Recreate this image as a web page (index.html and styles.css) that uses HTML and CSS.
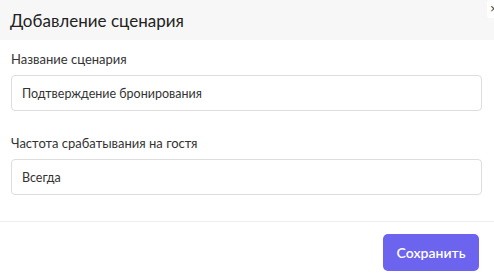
FILE: index.html
```html
<!DOCTYPE html>
<html lang="ru">
<head>
  <meta charset="UTF-8">
  <meta name="viewport" content="width=device-width, initial-scale=1.0">
  <title>Добавление сценария</title>
  <link rel="stylesheet" href="styles.css">
</head>
<body>
  <div class="modal">
    <div class="modal-header">
      <h2 class="modal-title">Добавление сценария</h2>
      <button class="close-btn">×</button>
    </div>
    <div class="modal-body">
      <div class="field">
        <label class="field-label">Название сценария</label>
        <div class="field-input">Подтверждение бронирования</div>
      </div>
      <div class="field">
        <label class="field-label">Частота срабатывания на гостя</label>
        <div class="field-input">Всегда</div>
      </div>
    </div>
    <div class="modal-footer">
      <button class="save-btn">Сохранить</button>
    </div>
  </div>
</body>
</html>
```
FILE: styles.css
```css
* {
  box-sizing: border-box;
}
body {
  margin: 0;
  padding: 0;
  font-family: Lato, "Noto Sans", sans-serif;
  background-color: #fff;
  color: #333;
}
.modal {
  width: 494px;
  height: 279px;
  overflow: hidden;
}
.modal-header {
  position: relative;
  height: 40px;
  background-color: #f7f7f7;
  display: flex;
  align-items: center;
  padding-left: 10px;
}
.modal-title {
  margin: 0;
  font-size: 17px;
  font-weight: 400;
  color: #222;
}
.close-btn {
  position: absolute;
  top: 0;
  left: 487px;
  width: 20px;
  height: 18px;
  border: none;
  border-radius: 3px;
  background-color: #fff;
  padding: 0 0 0 3px;
  text-align: left;
  font-size: 13px;
  line-height: 16px;
  color: #444;
}
.modal-body {
  padding: 10px 12px 26px 11px;
  border-bottom: 1px solid #eee;
}
.field {
  margin-bottom: 23px;
}
.field:last-child {
  margin-bottom: 0;
}
.field-label {
  display: block;
  font-size: 13px;
  line-height: 18px;
  margin-bottom: 7px;
  color: #333;
}
.field-input {
  height: 36px;
  border: 1px solid #ddd;
  border-radius: 4px;
  padding: 0 10px;
  display: flex;
  align-items: center;
  font-size: 12.5px;
  color: #333;
}
.modal-footer {
  display: flex;
  justify-content: flex-end;
  padding: 12px 15px 0 0;
}
.save-btn {
  width: 96px;
  height: 37px;
  border: none;
  border-radius: 5px;
  background-color: #6c63ef;
  color: #fff;
  font-family: inherit;
  font-size: 14px;
  font-weight: 600;
}
```
